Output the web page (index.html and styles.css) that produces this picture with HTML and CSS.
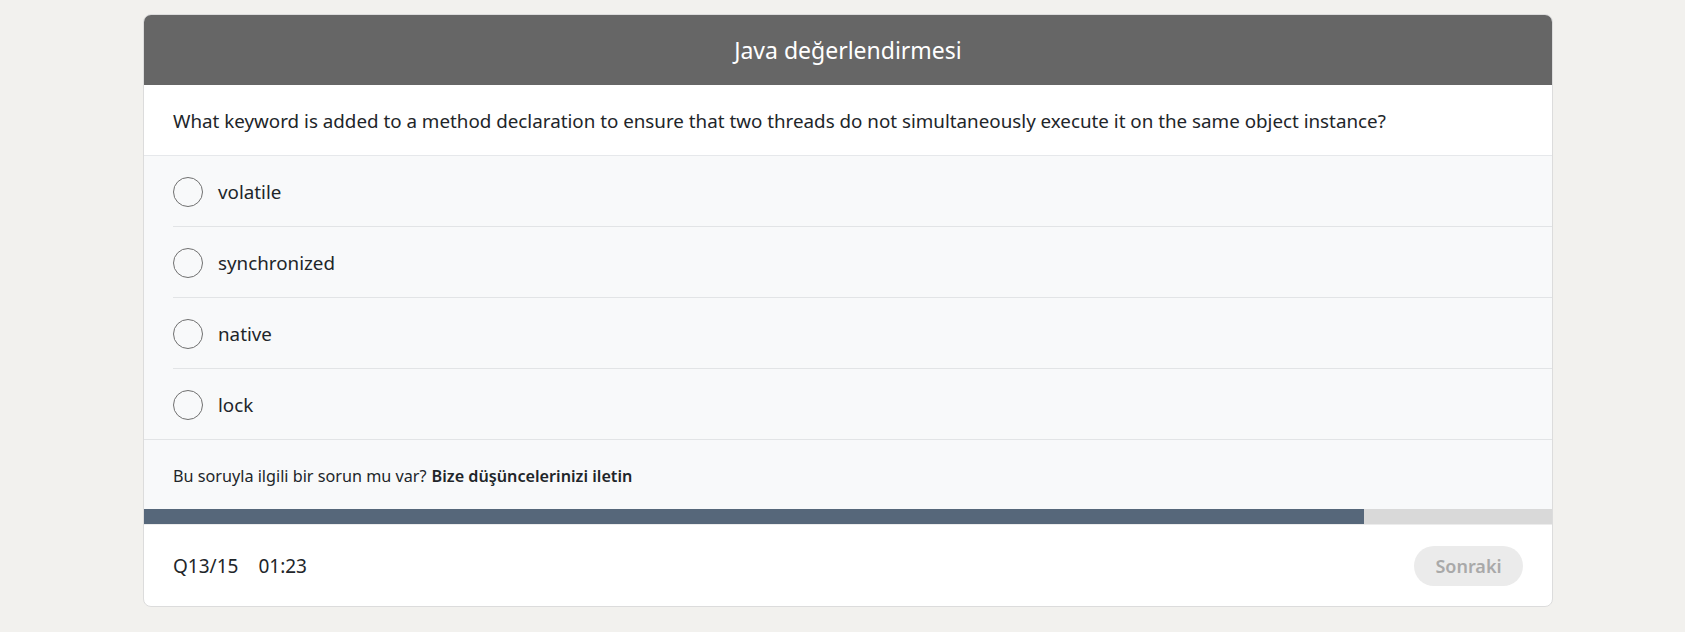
FILE: index.html
```html
<!DOCTYPE html>
<html lang="tr">
<head>
<meta charset="utf-8">
<title>Java değerlendirmesi</title>
<link rel="stylesheet" href="styles.css">
</head>
<body>
<div class="card">
  <div class="card-header">Java değerlendirmesi</div>
  <div class="question">What keyword is added to a method declaration to ensure that two threads do not simultaneously execute it on the same object instance?</div>
  <ul class="options">
    <li class="option"><span class="radio"></span><span class="label">volatile</span></li>
    <li class="option"><span class="radio"></span><span class="label">synchronized</span></li>
    <li class="option"><span class="radio"></span><span class="label">native</span></li>
    <li class="option"><span class="radio"></span><span class="label">lock</span></li>
  </ul>
  <div class="feedback">Bu soruyla ilgili bir sorun mu var? <strong>Bize düşüncelerinizi iletin</strong></div>
  <div class="progress"><div class="progress-fill" style="width: 86.67%"></div></div>
  <div class="footer">
    <div class="meta"><span>Q13/15</span><span>01:23</span></div>
    <button class="next" type="button">Sonraki</button>
  </div>
</div>
</body>
</html>
```

FILE: styles.css
```css
* { box-sizing: border-box; }
html, body { margin: 0; }
body {
  background: #f2f1ee;
  padding: 14px 132px 0 143px;
  font-family: "Segoe UI", "Noto Sans", "Open Sans", sans-serif;
  color: #212529;
}
.card {
  width: 1410px;
  background: #fff;
  border: 1px solid #dcdcdc;
  border-radius: 8px;
  overflow: hidden;
}
.card-header {
  height: 70px;
  background: #666666;
  color: #fff;
  font-size: 23px;
  display: flex;
  align-items: center;
  justify-content: center;
}
.question {
  height: 71px;
  padding: 1px 29px 0;
  display: flex;
  align-items: center;
  font-size: 18.8px;
  border-bottom: 1px solid #e6e8eb;
}
.options {
  list-style: none;
  margin: 0;
  padding: 0 0 0 29px;
  background: #f8f9fa;
}
.option {
  height: 71px;
  padding-top: 2px;
  display: flex;
  align-items: center;
  border-bottom: 1px solid #e2e4e6;
  font-size: 18.8px;
}
.option:last-child { margin-left: -29px; padding-left: 29px; }
.radio {
  width: 30px;
  height: 30px;
  border: 1.5px solid #707070;
  border-radius: 50%;
  flex: none;
  margin-right: 15px;
}
.feedback {
  height: 69px;
  background: #f8f9fa;
  padding: 2px 29px 0;
  display: flex;
  align-items: center;
  font-size: 16.2px;
  gap: 5px;
}
.feedback strong { font-weight: 600; }
.progress {
  height: 16px;
  background: #d9d9d9;
  border-bottom: 1px solid #ececec;
}
.progress-fill { height: 100%; background: #56677a; }
.footer {
  height: 81px;
  padding: 1px 29px 0;
  display: flex;
  align-items: center;
  justify-content: space-between;
}
.meta { display: flex; gap: 20px; font-size: 19px; }
.next {
  width: 109px;
  height: 40px;
  border: none;
  border-radius: 20px;
  background: #ebebeb;
  color: #a9a9a9;
  font-family: inherit;
  font-size: 18px;
  font-weight: 600;
}
```
